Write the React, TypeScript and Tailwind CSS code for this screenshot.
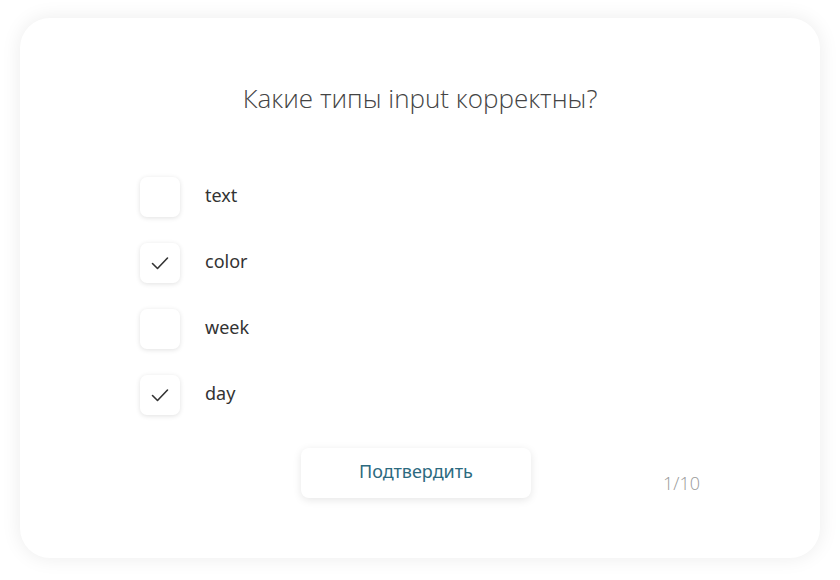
import React from "react";

const options = [
  { label: "text", checked: false },
  { label: "color", checked: true },
  { label: "week", checked: false },
  { label: "day", checked: true },
];

function Check() {
  return (
    <svg width="20" height="20" viewBox="0 0 20 20" fill="none">
      <path d="M2.5 10.5 L7.5 15.5 L17.5 5" stroke="#333" strokeWidth="1.6" strokeLinecap="round" strokeLinejoin="round" />
    </svg>
  );
}

export default function App() {
  return (
    <div className="w-[840px] h-[580px] bg-white pt-[18px] pl-[20px]" style={{ fontFamily: "'Noto Sans', Lato, sans-serif" }}>
      <div className="w-[800px] h-[540px] rounded-[30px] bg-white shadow-[0_0_20px_rgba(0,0,0,0.08)] flex flex-col">
        <h1 className="mt-[62px] text-center text-[26px] leading-[36px] font-light text-[#444]" style={{ fontFamily: "'Open Sans', sans-serif" }}>
          Какие типы input корректны?
        </h1>
        <div className="mt-[61px] ml-[120px] flex flex-col gap-[26px]">
          {options.map((o) => (
            <div key={o.label} className="flex items-center">
              <div className="w-[40px] h-[40px] rounded-[7px] bg-white shadow-[0_1px_5px_rgba(0,0,0,0.12)] flex items-center justify-center">
                {o.checked && <Check />}
              </div>
              <span className="ml-[25px] text-[18px] leading-[24px] font-normal text-[#333] -mt-[5px]">{o.label}</span>
            </div>
          ))}
        </div>
        <div className="mt-[33px] flex items-start">
          <button className="ml-[281px] w-[230px] h-[50px] rounded-[8px] bg-white shadow-[0_2px_8px_rgba(0,0,0,0.1)] text-[18px] text-[#2c6a80] font-normal">
            <span className="relative -top-[2px]">Подтвердить</span>
          </button>
          <span className="ml-[132px] mt-[23px] text-[18px] leading-[24px] font-light text-[#999]" style={{ fontFamily: "'Open Sans', sans-serif" }}>1/10</span>
        </div>
      </div>
    </div>
  );
}
